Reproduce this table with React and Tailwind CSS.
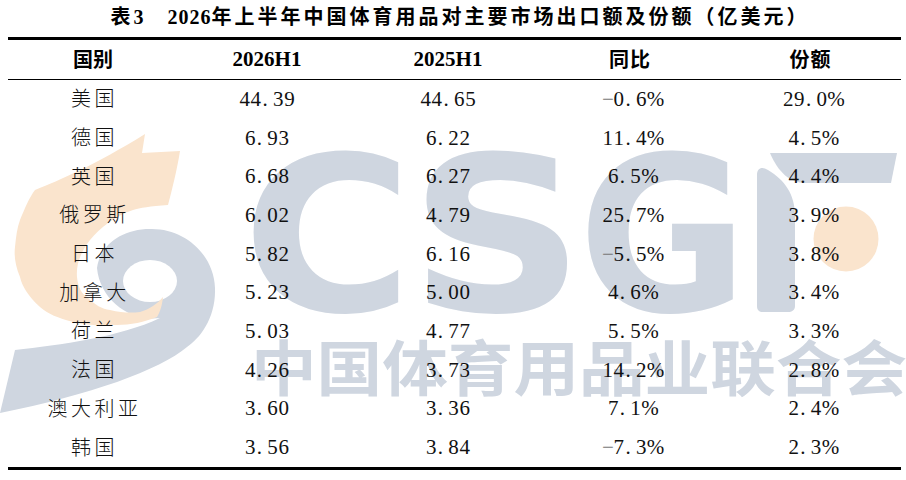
import React from "react";

const rows = [
  ["美国", "44.39", "44.65", "-0.6%", "29.0%"],
  ["德国", "6.93", "6.22", "11.4%", "4.5%"],
  ["英国", "6.68", "6.27", "6.5%", "4.4%"],
  ["俄罗斯", "6.02", "4.79", "25.7%", "3.9%"],
  ["日本", "5.82", "6.16", "-5.5%", "3.8%"],
  ["加拿大", "5.23", "5.00", "4.6%", "3.4%"],
  ["荷兰", "5.03", "4.77", "5.5%", "3.3%"],
  ["法国", "4.26", "3.73", "14.2%", "2.8%"],
  ["澳大利亚", "3.60", "3.36", "7.1%", "2.4%"],
  ["韩国", "3.56", "3.84", "-7.3%", "2.3%"],
];

function Num({ s }) {
  return (
    <span className="inline-flex">
      {s.split("").map((c, i) =>
        c === "-" ? (
          <span key={i} className="w-[11.2px] text-center text-[#777]">
            −
          </span>
        ) : c === "." ? (
          <span key={i} className="w-[11.2px] text-left pl-[1px]">
            .
          </span>
        ) : (
          <span key={i} className="w-[11.2px] text-center">
            {c}
          </span>
        )
      )}
    </span>
  );
}

function Watermark() {
  const gray = "#cfd6e0";
  const orange = "#fae4cd";
  return (
    <svg
      className="absolute left-0 top-0 w-[906px] h-[480px] pointer-events-none"
      viewBox="0 0 906 480"
    >
      <path
        d="M97 268 C100 245 122 229 150 229 C185 228 214 255 215 288 C216 318 200 338 187 347 C160 370 90 395 0 413 L15 350 C60 345 120 337 160 318 C130 322 100 300 97 268 Z"
        fill={gray}
      />
      <ellipse cx="150" cy="281" rx="27" ry="21" fill="#ffffff" />
      <path
        d="M35 190 C60 180 95 165 145 134 L142 153 L180 151 C177 170 172 190 168 205 C150 206 140 208 133 210 C115 216 100 228 90 240 C80 253 76 265 77 277 C78 288 82 294 87 297 C95 305 102 309 110 310 C122 313 132 313 140 312 C150 309 157 304 163 297 C162 306 160 312 157 317 C145 322 130 325 117 325 C100 326 85 325 73 322 C58 318 48 314 40 307 C28 296 22 286 20 277 C15 265 14 255 15 247 C16 237 17 228 20 220 C25 208 29 198 35 190 Z"
        fill={orange}
      />
      <g
        fill={gray}
        fontFamily="DejaVu Sans, sans-serif"
        fontWeight="bold"
        fontSize="216"
      >
        <text x="242" y="311" textLength="171" lengthAdjust="spacingAndGlyphs">
          C
        </text>
        <text x="409" y="311" textLength="176" lengthAdjust="spacingAndGlyphs">
          S
        </text>
        <text x="578" y="311" textLength="170" lengthAdjust="spacingAndGlyphs">
          G
        </text>
      </g>
      <path
        d="M770 153 L897 153 L891 183 L805 183 C790 183 778 172 770 153 Z"
        fill={gray}
      />
      <path
        d="M757 175 C757 168 762 166 768 170 C785 180 795 195 795 215 L795 306 C795 310 792 312 788 312 L763 312 C759 312 757 310 757 306 Z"
        fill={gray}
      />
      <circle cx="846" cy="239" r="32.5" fill={orange} />
      <text
        x="251"
        y="391"
        fill={gray}
        fontFamily="Noto Sans CJK SC, sans-serif"
        fontWeight="bold"
        fontSize="60"
        textLength="656"
        lengthAdjust="spacingAndGlyphs"
      >
        中国体育用品业联合会
      </text>
    </svg>
  );
}

export default function App() {
  return (
    <div className="relative w-[906px] h-[480px] overflow-hidden bg-white text-[#111] font-['Liberation_Serif','Noto_Sans_CJK_SC',serif]">
      <Watermark />
      <div className="relative">
        <div className="h-[37px] flex items-center justify-center pl-[14px] pb-[3px] text-[20px] font-bold leading-none text-black">
          <span className="tracking-[3px]">表3</span>
          <span className="ml-[21px] tracking-[1px]">2026</span>
          <span className="tracking-[3px]">
            年上半年中国体育用品对主要市场出口额及份额（亿美元）
          </span>
        </div>
        <div className="ml-[8px] w-[893px]">
          <div className="h-[3px] bg-black" />
          <div className="h-[39px] grid grid-cols-[170px_178px_184px_180px_181px] items-center text-center font-bold text-[20px] leading-none text-black">
            <div>国别</div>
            <div className="text-[21px]">2026H1</div>
            <div className="text-[21px]">2025H1</div>
            <div className="tracking-[1px]">同比</div>
            <div className="tracking-[1px]">份额</div>
          </div>
          <div className="h-[1px] bg-black" />
          {rows.map((r) => (
            <div
              key={r[0]}
              className="h-[38.7px] grid grid-cols-[170px_178px_184px_180px_181px] items-center text-center text-[21px] leading-none"
            >
              <div className="text-[20px] font-light tracking-[3.5px] pl-[3px]">
                {r[0]}
              </div>
              <div>
                <Num s={r[1]} />
              </div>
              <div>
                <Num s={r[2]} />
              </div>
              <div>
                <Num s={r[3]} />
              </div>
              <div>
                <Num s={r[4]} />
              </div>
            </div>
          ))}
          <div className="h-[3px] bg-black" />
        </div>
      </div>
    </div>
  );
}
